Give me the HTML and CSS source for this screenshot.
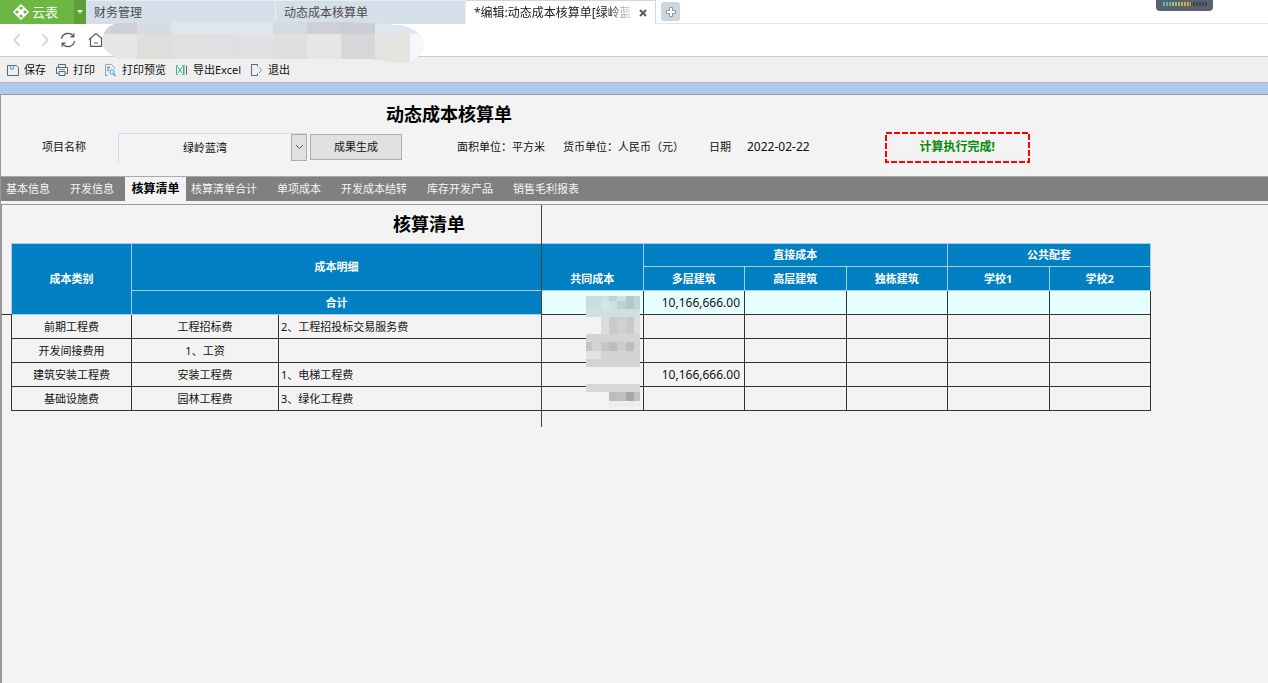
FILE: index.html
```html
<!DOCTYPE html>
<html lang="zh-CN">
<head>
<meta charset="utf-8">
<title>动态成本核算单</title>
<link rel="stylesheet" href="styles.css">
</head>
<body>
<div class="app">
  <header class="topbar">
    <button class="brand" type="button">
      <svg width="16" height="16" viewBox="0 0 16 16" fill="none" stroke="#fff" stroke-width="1.6"><path d="M8 1l3 3-3 3-3-3zM4 5l3 3-3 3-3-3zM12 5l3 3-3 3-3-3zM8 9l3 3-3 3-3-3z"/></svg>
      <span>云表</span>
    </button>
    <button class="brand-menu" type="button" aria-label="菜单"><svg width="6" height="4" viewBox="0 0 6 4"><path d="M0 0h6L3 3.5z" fill="#fff"/></svg></button>
    <nav class="windows">
      <button class="window" type="button">财务管理</button>
      <button class="window" type="button">动态成本核算单</button>
      <div class="window window-active">
        <span class="window-title">*编辑:动态成本核算单[绿岭蓝</span>
        <button class="window-close" type="button" aria-label="关闭"><svg width="8" height="8" viewBox="0 0 8 8"><path d="M1 1l6 6M7 1L1 7" stroke="#555b63" stroke-width="2"/></svg></button>
      </div>
      <button class="window-add" type="button" aria-label="新建"><svg width="12" height="12" viewBox="0 0 12 12"><path d="M4.500 1.500h3v3h3v3h-3v3h-3v-3h-3v-3h3z" fill="#fff" stroke="#8b929a"/></svg></button>
    </nav>
    <svg class="meter" width="57" height="11" viewBox="0 0 57 11"><path d="M0 0h57v7q0 4-4 4H4q-4 0-4-4z" fill="#596070"/><path d="M7 4h44" stroke="#3c4250" stroke-width="4" stroke-dasharray="2 1"/><path d="M7 4h10" stroke="#4cc2ad" stroke-width="4" stroke-dasharray="2 1"/><path d="M16 4h10" stroke="#9cbf72" stroke-width="4" stroke-dasharray="2 1"/><path d="M25 4h10" stroke="#c9ae45" stroke-width="4" stroke-dasharray="2 1"/></svg>
  </header>

  <div class="navbar">
    <button type="button" aria-label="后退"><svg width="16" height="16" viewBox="0 0 16 16" fill="none" stroke="#c4c4c4" stroke-width="1.300"><path d="M11.500 2.500L6 8l5.500 5.500"/></svg></button>
    <button type="button" aria-label="前进"><svg width="16" height="16" viewBox="0 0 16 16" fill="none" stroke="#c4c4c4" stroke-width="1.300"><path d="M8.500 2.500L14 8l-5.500 5.500"/></svg></button>
    <button type="button" aria-label="刷新"><svg width="16" height="16" viewBox="0 0 16 16" fill="none" stroke="#555b62" stroke-width="1.300"><path d="M1.500 7a6.500 6.500 0 0 1 12-2.500M14.500 9a6.500 6.500 0 0 1-12 2.500M13.800 1.200v3.600h-3.500M2.200 14.800v-3.600h3.500"/></svg></button>
    <button class="home" type="button" aria-label="主页"><svg width="16" height="16" viewBox="0 0 16 16" fill="none" stroke="#555b62" stroke-width="1.200"><path d="M1 7.500L8 1.500l7 6M2.500 6.500v7.800h11V6.500M6 11h4"/></svg></button>
    <svg class="mask" width="322" height="41" viewBox="0 0 322 41">
      <defs><clipPath id="brush"><path d="M16 1Q120-1 240 0Q280 1 302 4Q322 10 322 23Q321 35 306 40Q295 42 270 37H18Q0 31 0 18Q2 4 16 1z"/></clipPath></defs>
      <g clip-path="url(#brush)">
        <rect width="322" height="41" fill="#e6e6e5"/>
        <rect width="322" height="12" fill="#e0e6ef"/>
        <rect width="35" height="12" fill="#ced1d9"/><rect x="35" width="34" height="12" fill="#d7dce4"/>
        <rect x="171" width="34" height="12" fill="#d4dae2"/><rect x="205" width="34" height="12" fill="#cdd0d8"/><rect x="239" width="34" height="12" fill="#cbced7"/>
        <rect x="35" y="12" width="34" height="29" fill="#dededb"/><rect x="69" y="12" width="34" height="29" fill="#e2dfdf"/><rect x="103" y="12" width="34" height="29" fill="#e0e0e0"/><rect x="137" y="12" width="34" height="29" fill="#e2e2e2"/><rect x="171" y="12" width="34" height="29" fill="#dfdfdf"/><rect x="205" y="12" width="34" height="29" fill="#e5e5e5"/><rect x="239" y="12" width="34" height="29" fill="#d7d7d7"/><rect x="273" y="12" width="35" height="29" fill="#e4e4e1"/><rect x="308" y="12" width="14" height="29" fill="#f6f8fb"/>
      </g>
    </svg>
  </div>

  <div class="toolbar">
    <button type="button"><svg width="14" height="14" viewBox="0 0 14 14" fill="none"><path d="M1.500 2.500h9l2 2v8h-11z" stroke="#5d6670"/><path d="M4.500 2v4h3V2" stroke="#4f9fd8"/></svg>保存</button>
    <button type="button"><svg width="14" height="14" viewBox="0 0 14 14" fill="none"><path d="M3.500 4V1.500h7V4M3.500 10.500h-2v-6h11v6h-2M4 8.500h6v4H4z" stroke="#5d6670"/><path d="M4 6.500h6" stroke="#4f9fd8"/></svg>打印</button>
    <button type="button"><svg width="14" height="14" viewBox="0 0 14 14" fill="none"><path d="M1.500 13V1.500h6l3 3V6M1 12.500h3" stroke="#9aa2aa"/><path d="M3 4.500h3M3 7h2" stroke="#3e9fe8" stroke-width="1.500"/><circle cx="8" cy="9" r="2.200" stroke="#3e9fe8"/><path d="M9.500 11l2 2" stroke="#3e9fe8" stroke-width="1.400"/></svg>打印预览</button>
    <button type="button"><svg width="14" height="14" viewBox="0 0 14 14" fill="none"><path d="M3 2.500H1.500v9H3M7 2.500h1.500v9H7M3 4l4 6M7 4l-4 6" stroke="#3eb58a"/><path d="M9.500 1.500v11" stroke="#8fd3b9"/><path d="M11.500 2.500v9" stroke="#5d6670"/></svg>导出Excel</button>
    <button type="button"><svg width="14" height="14" viewBox="0 0 14 14" fill="none"><path d="M7.500 3.500v-2h-6v11h6v-2" stroke="#5d6670"/><path d="M9 4.500L11.500 7.200 9 10" stroke="#3e9fe8"/></svg>退出</button>
  </div>
  <div class="band"></div>

  <main class="form">
    <h1 class="form-title">动态成本核算单</h1>
    <div class="fields">
      <label class="project-label" for="project">项目名称</label>
      <div class="combo">
        <select id="project"><option>绿岭蓝湾</option></select>
        <span class="combo-arrow"><svg width="9" height="6" viewBox="0 0 9 6"><path d="M1 1l3.500 3.500L8 1" fill="none" stroke="#555"/></svg></span>
      </div>
      <button class="generate" type="button">成果生成</button>
      <span class="area-unit">面积单位：平方米</span>
      <span class="money-unit">货币单位：人民币（元）</span>
      <span class="date-label">日期</span>
      <time class="number">2022-02-22</time>
      <output class="status"><svg width="100%" height="100%"><rect x="1" y="1" width="143" height="29" fill="none" stroke="#f00" stroke-width="2" stroke-dasharray="6 2"/></svg><span>计算执行完成!</span></output>
    </div>
    <nav class="tabs">
      <button type="button">基本信息</button>
      <button type="button">开发信息</button>
      <button class="tab-active" type="button">核算清单</button>
      <button type="button">核算清单合计</button>
      <button type="button">单项成本</button>
      <button type="button">开发成本结转</button>
      <button type="button">库存开发产品</button>
      <button type="button">销售毛利报表</button>
    </nav>

    <section class="sheet">
      <h2 class="sheet-title">核算清单</h2>
      <table>
        <colgroup><col class="c-kind"><col class="c-item"><col class="c-detail"><col class="c-num"><col class="c-num"><col class="c-num"><col class="c-num"><col class="c-num"><col class="c-num"></colgroup>
        <thead>
          <tr><th rowspan="3">成本类别</th><th colspan="2" rowspan="2">成本明细</th><th class="low" rowspan="2">共同成本</th><th colspan="3">直接成本</th><th colspan="2">公共配套</th></tr>
          <tr><th>多层建筑</th><th>高层建筑</th><th>独栋建筑</th><th>学校1</th><th>学校2</th></tr>
          <tr class="total"><th colspan="2">合计</th>
            <td class="masked">
              <svg class="mosaic" width="54" height="112" viewBox="0 0 54 112">
                <rect width="54" height="21" fill="#d0dfdf"/><path fill="#cbdcdc" d="M0 0h15v12H0z"/><path fill="#d5e8e7" d="M15 5h8v8h-8z"/><path fill="#bfd1cf" d="M23 0h8v5h-8zM31 5h9v8h-9z"/><path fill="#b5c8c8" d="M40 0h8v13h-8z"/><path fill="#c4d4d4" d="M48 0h6v13h-6z"/>
                <path fill="#dedcd7" d="M15 21h8v17h-8z"/><path fill="#c8c9cb" d="M23 21h8v17h-8zM40 21h8v17h-8z"/><path fill="#d2d0cf" d="M31 21h9v17h-9z"/><path fill="#dcddde" d="M48 21h6v17h-6z"/>
                <path fill="#d4d4d4" d="M0 38h54v33H0z"/><path fill="#c5c5c2" d="M0 46h6v9H0zM15 46h8v9h-8z"/><path fill="#e2e2e1" d="M0 55h15v8H0z"/><path fill="#bcbdbf" d="M23 46h8v9h-8zM40 46h8v9h-8z"/><path fill="#cfcdcc" d="M31 46h9v9h-9z"/>
                <path fill="#d8d8d8" d="M0 88h54v8H0z"/><path fill="#f3f3f3" d="M0 96h54v16H0z"/><path fill="#c0bbb7" d="M23 96h8v9h-8z"/><path fill="#bec0c3" d="M31 96h9v9h-9z"/><path fill="#a5a9ad" d="M40 96h8v9h-8z"/><path fill="#bfc3c5" d="M48 96h6v9h-6z"/><path fill="#ededee" d="M23 105h31v6H23z"/>
              </svg>
            </td><td class="number">10,166,666.00</td><td></td><td></td><td></td><td></td></tr>
        </thead>
        <tbody>
          <tr><td>前期工程费</td><td>工程招标费</td><td class="detail">2、工程招投标交易服务费</td><td></td><td></td><td></td><td></td><td></td><td></td></tr>
          <tr><td>开发间接费用</td><td>1、工资</td><td></td><td></td><td></td><td></td><td></td><td></td><td></td></tr>
          <tr><td>建筑安装工程费</td><td>安装工程费</td><td class="detail">1、电梯工程费</td><td></td><td class="number">10,166,666.00</td><td></td><td></td><td></td><td></td></tr>
          <tr><td>基础设施费</td><td>园林工程费</td><td class="detail">3、绿化工程费</td><td></td><td></td><td></td><td></td><td></td><td></td></tr>
        </tbody>
      </table>
      <i class="freeze-column"></i>
      <i class="freeze-row"></i>
    </section>
  </main>
</div>
</body>
</html>
```
FILE: styles.css
```css
* { box-sizing: border-box; }
body {
  margin: 0;
  background: #f3f3f3;
  color: #111;
  font: 11px/16px "Noto Sans", "Noto Sans CJK SC", sans-serif;
}
button, select {
  margin: 0;
  padding: 0;
  border: 0;
  background: none;
  color: inherit;
  font: inherit;
}
h1, h2 { margin: 0; font-size: 18px; line-height: 24px; color: #000; }
svg { display: block; flex: none; }
.app { display: flex; flex-direction: column; min-height: 100vh; }

/* window tabs */
.topbar {
  display: flex;
  height: 24px;
  background: #fff;
  border-bottom: 1px solid #dfe7ee;
}
.brand, .brand-menu {
  display: flex;
  align-items: center;
  height: 24px;
  color: #fff;
  background: #6cb644;
}
.brand { width: 74px; padding-left: 13px; gap: 3px; font-size: 13px; }
.brand-menu { width: 12px; justify-content: center; background: #5ca037; }
.windows { display: flex; flex: 1; min-width: 0; }
.window {
  width: 190px;
  height: 24px;
  padding-left: 8px;
  text-align: left;
  font-size: 12px;
  color: #4e4a50;
  background: #d5dfe9;
  border-top: 1px solid #e6edf3;
  border-right: 1px solid #e6edf3;
}
.window-active {
  display: flex;
  align-items: center;
  gap: 5px;
  background: #fff;
  color: #222;
  border-color: #ccd9e4;
}
.window-title {
  width: 160px;
  white-space: nowrap;
  mask-image: linear-gradient(to right, #000 84%, transparent);
}
.window-add {
  display: grid;
  place-items: center;
  width: 19px;
  height: 19px;
  margin: 2px 0 0 5px;
  border-radius: 3px;
  background: #ccd6df;
}
.meter { margin-right: 55px; }

/* navigation */
.navbar {
  position: relative;
  display: flex;
  align-items: center;
  gap: 10px;
  height: 33px;
  padding-left: 8px;
  background: #fff;
  border-bottom: 1px solid #cbcbcb;
}
.navbar .home { margin-left: 2px; }
.mask { position: absolute; left: 102px; top: -2px; }

.toolbar {
  display: flex;
  align-items: center;
  gap: 9px;
  height: 25px;
  padding-left: 6px;
  background: #efefef;
}
.toolbar button { display: flex; align-items: center; gap: 4px; }
.band {
  height: 13px;
  background: #b0caec;
  border-top: 1px solid #bbb;
  border-bottom: 1px solid #999;
}

/* form heading */
.form {
  display: flex;
  flex: 1;
  flex-direction: column;
  border-left: 1px solid #999;
}
.form-title { padding: 7px 0 0 385px; }
.fields {
  display: flex;
  align-items: center;
  height: 42px;
  margin-bottom: 8px;
  padding-left: 41px;
  white-space: nowrap;
}
.project-label { width: 76px; }
.combo { position: relative; width: 189px; height: 29px; }
.combo select {
  width: 100%;
  height: 100%;
  padding-right: 16px;
  appearance: none;
  text-align: center;
  text-align-last: center;
  border-top: 1px solid #d5d5f7;
  border-left: 1px solid #d5d5f7;
}
.combo-arrow {
  position: absolute;
  top: 1px;
  right: 0;
  display: grid;
  place-items: center;
  width: 16px;
  height: 27px;
  background: #e0e0e0;
  border: 1px solid #adadad;
  pointer-events: none;
}
.generate {
  width: 92px;
  height: 26px;
  margin: 0 55px 0 3px;
  background: #e1e1e1;
  border: 1px solid #adadad;
}
.area-unit { width: 106px; }
.money-unit { width: 146px; }
.date-label { width: 38px; }
.number { font-size: 12px; }
.status {
  position: relative;
  display: grid;
  place-items: center;
  width: 145px;
  height: 31px;
  margin-left: 75px;
  color: #0a8a0a;
  font-size: 12px;
  font-weight: bold;
}
.status svg { position: absolute; inset: 0; }

/* sheet tabs */
.tabs {
  display: flex;
  gap: 2px;
  height: 25px;
  background: #808080;
  border-top: 1px solid #aaa;
  color: #f5f5f5;
}
.tabs button { flex: none; padding: 0 9px; }
.tabs button:first-child { padding-left: 5px; }
.tabs .tab-active {
  width: 61px;
  padding: 0 4px;
  background: #f3f3f3;
  color: #000;
  font-size: 12px;
  font-weight: bold;
}
.tabs .tab-active + button { padding-left: 3px; }

.sheet {
  position: relative;
  flex: 1;
  margin-top: 3px;
  padding-left: 9px;
  border-top: 1px solid #999;
  border-left: 1px solid #999;
}
.sheet-title { padding: 7px 0 7px 382px; }
table {
  width: 1140px;
  table-layout: fixed;
  border-collapse: collapse;
}
.c-kind { width: 120px; }
.c-item { width: 147px; }
.c-detail { width: 263px; }
tr { height: 24px; }
thead tr:first-child { height: 23px; }
th, td {
  padding: 0 3px;
  text-align: center;
  vertical-align: middle;
}
th {
  color: #fff;
  background: #0080c2;
  border: 1px solid #a5d0e8;
}
th.low { vertical-align: bottom; padding-bottom: 3px; }
td { border: 1px solid #333; }
.total td { background: #e5ffff; }
td.number { text-align: right; padding-right: 4px; }
td.detail { text-align: left; padding-left: 2px; }
td.masked { position: relative; }
.mosaic { position: absolute; top: 5px; right: 3px; z-index: 1; }
.freeze-column {
  position: absolute;
  top: 0;
  left: 539px;
  width: 1px;
  height: 222px;
  background: #444;
}
.freeze-row {
  position: absolute;
  top: 109px;
  left: 0;
  width: 10px;
  height: 1px;
  background: #333;
}
```
